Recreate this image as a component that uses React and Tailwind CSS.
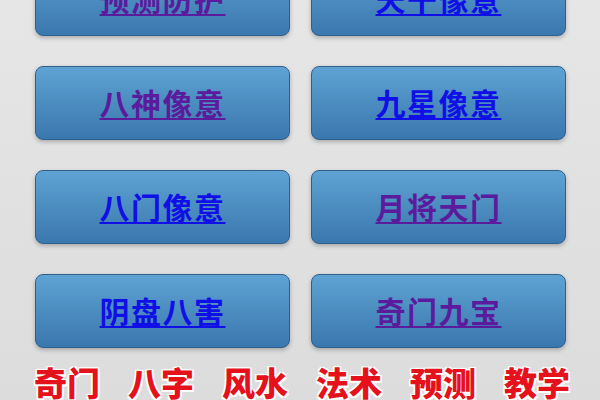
const ITEMS = [
  { label: '预测防护', visited: true },
  { label: '天干像意', visited: false },
  { label: '八神像意', visited: true },
  { label: '九星像意', visited: false },
  { label: '八门像意', visited: false },
  { label: '月将天门', visited: true },
  { label: '阴盘八害', visited: false },
  { label: '奇门九宝', visited: true },
]

const TAGS = ['奇门', '八字', '风水', '法术', '预测', '教学']

export default function App() {
  return (
    <div
      className="w-[600px] h-[400px] overflow-hidden bg-gradient-to-b from-[#e6e6e6] to-[#dcdcdc]"
      style={{ fontFamily: '"Noto Sans CJK SC", "Noto Sans", sans-serif' }}
    >
      <div className="grid grid-cols-[255px_255px] gap-x-[21px] gap-y-[30px] pl-[35px] mt-[-38px]">
        {ITEMS.map(item => (
          <a
            key={item.label}
            href="#"
            className="h-[74px] flex items-center justify-center rounded-[8px] border border-[#2f5f8c] bg-gradient-to-b from-[#5ea3d3] to-[#3a77ae] shadow-[0_2px_4px_rgba(0,0,0,0.25)]"
          >
            <span
              className={`text-[30px] font-bold leading-none underline decoration-2 underline-offset-[3px] tracking-[1.5px] mt-[-3px] ${
                item.visited ? 'text-[#5a1c9c]' : 'text-[#1010e6]'
              }`}
            >
              {item.label}
            </span>
          </a>
        ))}
      </div>

      {/* Bottom banner */}
      <div className="flex items-center gap-[28px] pl-[34px] mt-[18px]">
        {TAGS.map(t => (
          <span
            key={t}
            className="text-[33px] font-black leading-none text-[#e5121c] [text-shadow:0_0_3px_#fff,1.5px_1.5px_0_#fff,-1.5px_-1.5px_0_#fff,1.5px_-1.5px_0_#fff,-1.5px_1.5px_0_#fff]"
          >
            {t}
          </span>
        ))}
      </div>
    </div>
  )
}
